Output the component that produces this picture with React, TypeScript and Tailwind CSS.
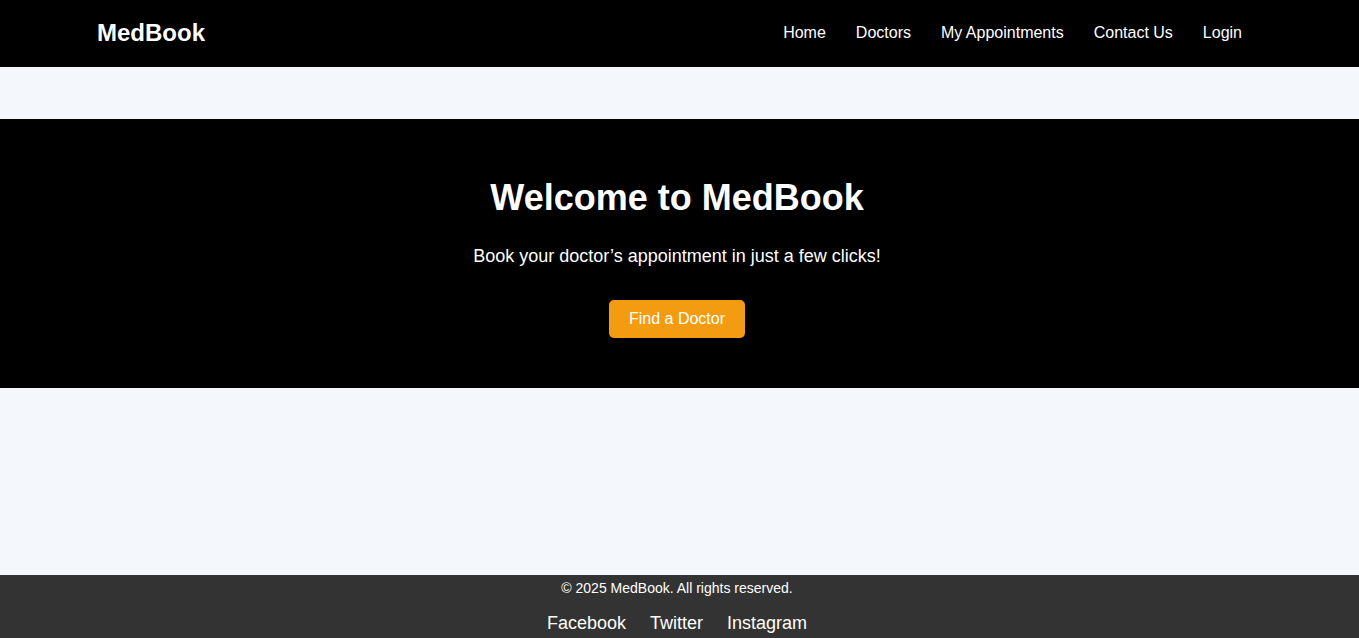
const navLinks = ["Home", "Doctors", "My Appointments", "Contact Us", "Login"];
const socials = ["Facebook", "Twitter", "Instagram"];

export default function App() {
  return (
    <div className="min-h-screen bg-[#f4f7fc] font-['Liberation_Sans',Arial,sans-serif]">
      {/* Header */}
      <header className="h-[67px] bg-black text-white">
        <div className="flex h-full items-center justify-between pb-[2px] pl-[97px] pr-[117px]">
          <h1 className="text-[24px] font-bold leading-none">MedBook</h1>
          <nav className="flex items-center gap-[30px] text-[16px]">
            {navLinks.map((link) => (
              <a key={link} href="#" className="text-white">
                {link}
              </a>
            ))}
          </nav>
        </div>
      </header>

      {/* Hero */}
      <section className="mt-[52px] h-[269px] bg-black pr-[5px] pt-[58px] text-center text-white">
        <h2 className="text-[36px] font-bold leading-[41px]">Welcome to MedBook</h2>
        <p className="mt-[28px] text-[18px] leading-[21px]">
          Book your doctor’s appointment in just a few clicks!
        </p>
        <button className="mt-[33px] h-[38px] rounded-[5px] bg-[#f39c12] px-[20px] text-[16px] text-white">
          Find a Doctor
        </button>
      </section>

      <div className="h-[187px]" />

      {/* Footer */}
      <footer className="bg-[#333333] pb-4 pr-[5px] pt-[4px] text-center text-white">
        <p className="text-[14px] leading-[18px]">© 2025 MedBook. All rights reserved.</p>
        <div className="mt-[16px] flex justify-center gap-[24px] text-[18px] leading-[21px]">
          {socials.map((s) => (
            <a key={s} href="#">
              {s}
            </a>
          ))}
        </div>
      </footer>
    </div>
  );
}
